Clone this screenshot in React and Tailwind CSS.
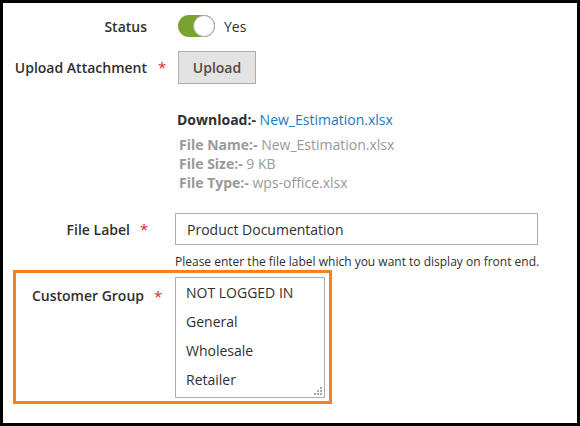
import React from "react";

const star = <span className="text-[#e22626] text-[15px]">*</span>;

function App() {
  return (
    <div className="w-[580px] h-[426px] border-[3px] border-black bg-white font-['Open_Sans',sans-serif] text-[14px] text-[#303030]">
      {/* Status */}
      <div className="flex items-center h-[22px] mt-[12px]">
        <div className="w-[144px] text-right font-semibold">Status</div>
        <div className="ml-[31px] flex items-center">
          <div className="w-[37px] h-[22px] rounded-full bg-[#79a22e] flex justify-end">
            <div className="w-[22px] h-[22px] rounded-full bg-white border border-[#adadad]" />
          </div>
          <span className="ml-[9px]">Yes</span>
        </div>
      </div>

      {/* Upload Attachment */}
      <div className="flex items-center mt-[14px]">
        <div className="w-[144px] text-right font-semibold">Upload Attachment</div>
        <div className="w-[31px] pl-[11px]">{star}</div>
        <button className="w-[78px] h-[33px] bg-[#e3e3e3] border border-[#adadad] text-[#514943] font-semibold text-[14px]">
          Upload
        </button>
      </div>

      {/* File info */}
      <div className="pl-[174px] mt-[26px]">
        <div className="leading-[20px]">
          <span className="font-bold">Download:-</span>{" "}
          <span className="text-[#1979c3]">New_Estimation.xlsx</span>
        </div>
        <div className="pl-[2px] mt-[5px] text-[#999] leading-[19px]">
          <div>
            <span className="font-bold">File Name:-</span> New_Estimation.xlsx
          </div>
          <div>
            <span className="font-bold">File Size:-</span> 9 KB
          </div>
          <div>
            <span className="font-bold">File Type:-</span> wps-office.xlsx
          </div>
        </div>
      </div>

      {/* File Label */}
      <div className="flex items-center mt-[21px]">
        <div className="w-[127px] text-right font-semibold">File Label</div>
        <div className="w-[45px] pl-[10px]">{star}</div>
        <div className="w-[363px] h-[32px] border border-[#adadad] flex items-center px-[11px]">
          Product Documentation
        </div>
      </div>
      <div className="pl-[172px] mt-[8px] text-[12px] leading-[17px]">
        Please enter the file label which you want to display on front end.
      </div>

      {/* Customer Group */}
      <div className="ml-[10px] mt-0 w-[319px] h-[134px] border-[3px] border-[#f58220] flex items-start pt-[4px]">
        <div className="w-[128px] text-right font-semibold mt-[8px]">Customer Group</div>
        <div className="w-[31px] pl-[10px] mt-[8px]">{star}</div>
        <div className="relative w-[150px] h-[121px] border border-[#adadad] pl-[10px] pt-[3px]">
          {["NOT LOGGED IN", "General", "Wholesale", "Retailer"].map((o) => (
            <div key={o} className="h-[29px] leading-[24px]">
              {o}
            </div>
          ))}
          <svg className="absolute right-[2px] bottom-[2px]" width="8" height="8" viewBox="0 0 8 8">
            <rect x="6" y="0" width="2" height="2" fill="#aaa" />
            <rect x="3" y="3" width="2" height="2" fill="#aaa" />
            <rect x="6" y="3" width="2" height="2" fill="#aaa" />
            <rect x="0" y="6" width="2" height="2" fill="#aaa" />
            <rect x="3" y="6" width="2" height="2" fill="#aaa" />
            <rect x="6" y="6" width="2" height="2" fill="#aaa" />
          </svg>
        </div>
      </div>
    </div>
  );
}

export default App;
